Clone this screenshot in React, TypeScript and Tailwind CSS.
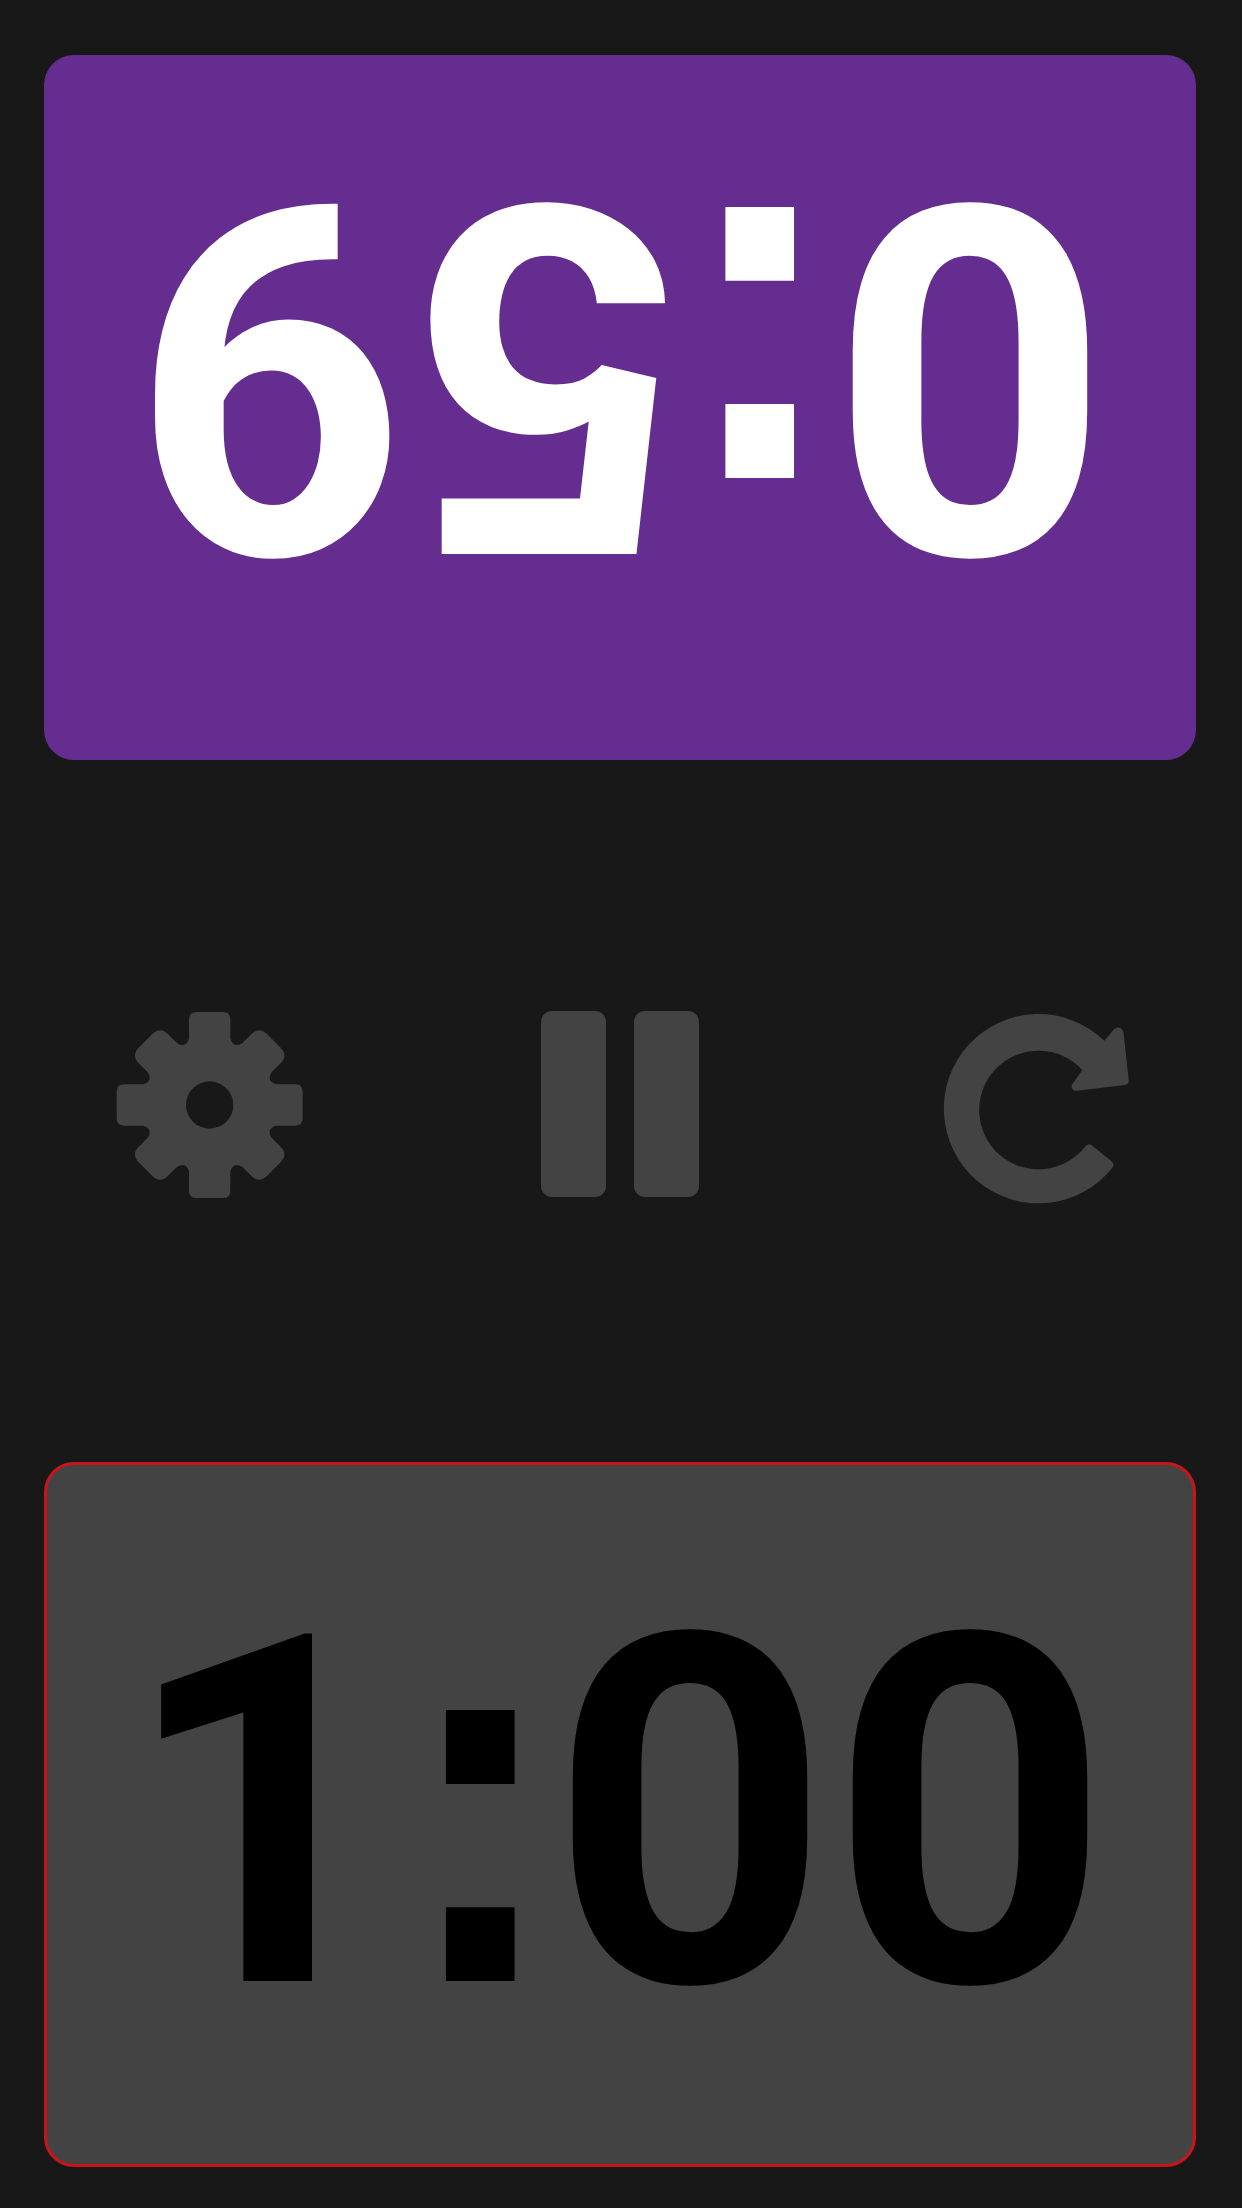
// App.tsx - chess clock style timer
import type { ReactNode } from "react"

const ICON = "#434343"

// builds the 8 tooth cog outline, straight teeth are a bit longer than the diagonal ones
const gearPath = () => {
  const cx = 389
  const cy = 372
  let d = ""
  for (let i = 0; i < 8; i++) {
    const a = (i * Math.PI) / 4
    const diag = i % 2 === 1
    const len = diag ? 272 : 279
    const r = diag ? 34 : 22
    const hw = 62
    const p = (x: number, y: number) => {
      const px = x * Math.cos(a) - y * Math.sin(a) + cx
      const py = x * Math.sin(a) + y * Math.cos(a) + cy
      return `${px.toFixed(1)} ${py.toFixed(1)}`
    }
    d += `${i === 0 ? "M" : "L"} ${p(-hw, -200)} L ${p(-hw, -len + r)} Q ${p(-hw, -len)} ${p(-hw + r, -len)} `
    d += `L ${p(hw - r, -len)} Q ${p(hw, -len)} ${p(hw, -len + r)} L ${p(hw, -200)} Q ${p(70, -169)} `
    const next = a + Math.PI / 4
    const nx = -hw * Math.cos(next) + 200 * Math.sin(next) + cx
    const ny = -hw * Math.sin(next) - 200 * Math.cos(next) + cy
    d += `${nx.toFixed(1)} ${ny.toFixed(1)} `
  }
  return d + "Z M 389 301 A 71 71 0 1 0 389 443 A 71 71 0 1 0 389 301 Z"
}

const GearIcon = () => (
  <svg width="280" height="260" viewBox="-39 0 840 780">
    <path d={gearPath()} fill={ICON} fillRule="evenodd" />
  </svg>
)

const PauseIcon = () => (
  <svg width="200" height="220" viewBox="3 33 600 660">
    <rect x="63" y="63" width="195" height="558" rx="33" fill={ICON} />
    <rect x="342" y="63" width="195" height="558" rx="33" fill={ICON} />
  </svg>
)

const RestartIcon = () => (
  <svg width="240" height="240" viewBox="-15 3 720 720">
    <path
      fill={ICON}
      d="M 553 152 L 582 118 Q 592 108 604 116 Q 610 121 611 130 L 626 270 Q 627 283 615 285 L 470 302 Q 455 303 455 288 Q 456 284 459 280 L 487 240 A 178 178 0 1 0 497 468 Q 505 459 515 466 L 573 512 Q 586 522 576 535 A 284 284 0 1 1 553 152 Z"
    />
  </svg>
)

// colon comes from Liberation Sans because its dots are square like the original
const Colon = () => (
  <span className="inline-block w-[140px] font-['Liberation_Sans',sans-serif] -translate-x-[11px] scale-y-110 origin-[81px_413px]">:</span>
)

const Panel = ({ left, right, className, textClassName }: { left: ReactNode; right: string; className: string; textClassName?: string }) => (
  <div className={`h-[705px] rounded-[30px] flex items-center justify-center whitespace-nowrap font-['Roboto',sans-serif] font-bold text-[488px] leading-none ${className}`}>
    <span className={`inline-block ${textClassName ?? ""}`}>
      {left}
      <Colon />
      {right}
    </span>
  </div>
)

const App = () => {
  return (
    <div className="w-[1242px] h-[2208px] bg-[#181818] pl-[44px] pr-[46px] pt-[55px] flex flex-col">
      {/* Player one, flipped for the person across the table */}
      <Panel left="0" right="59" className="bg-[#662d91] text-white pb-[66px]" textClassName="rotate-180" />

      {/* Controls */}
      <div className="h-[702px] -ml-[44px] -mr-[46px] grid grid-cols-3 items-center justify-items-center">
        <GearIcon />
        <PauseIcon />
        <RestartIcon />
      </div>

      {/* Player two */}
      <Panel
        left={<span className="inline-block -translate-x-[9px]">1</span>}
        right="00"
        className="bg-[#434343] text-black border-[3px] border-[#c9141c] pb-[4px]"
      />
    </div>
  )
}

export default App
